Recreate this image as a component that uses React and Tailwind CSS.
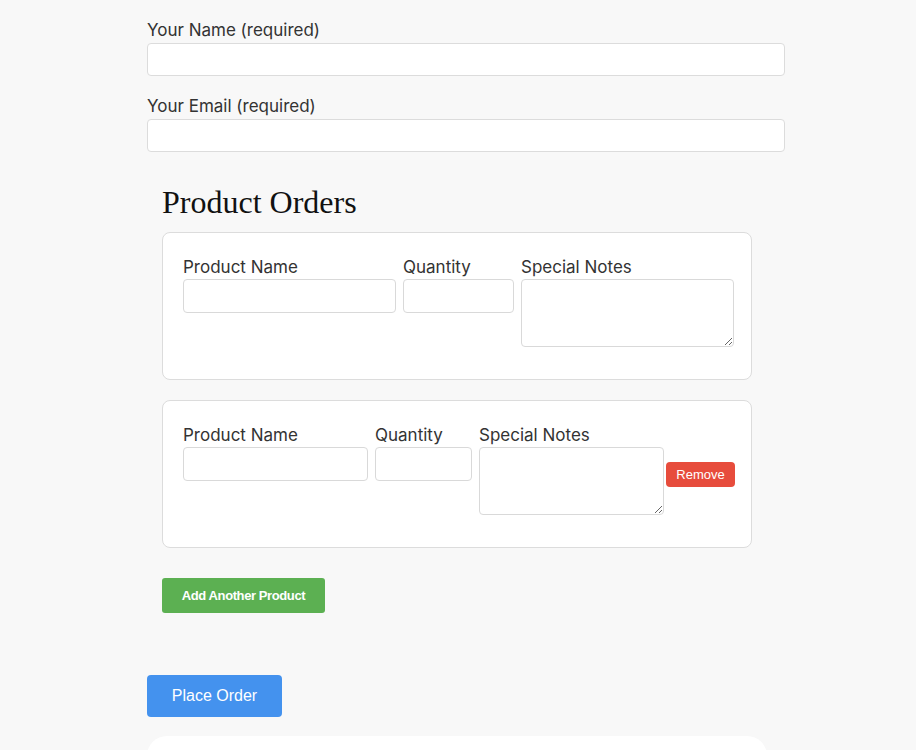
import React from "react";

const inputCls =
  "block w-full h-[34px] bg-white border border-[#d9d9d9] rounded-[4px] px-2 text-[15px]";

const ProductRow = ({ removable, widths }) => {
  return (
    <div className="bg-white border border-[#dcdcdc] rounded-[8px] pl-[20px] pr-[16px] pt-[22px] pb-[32px]">
      <div className="flex items-center">
        <div className={`flex ${removable ? "gap-[7px]" : "gap-[7px] w-full"}`}>
          <div className={widths[0]}>
            <label className="block text-[17px] leading-[24px] text-[#333]">Product Name</label>
            <input type="text" className={inputCls} />
          </div>
          <div className={widths[1]}>
            <label className="block text-[17px] leading-[24px] text-[#333]">Quantity</label>
            <input type="number" className={inputCls} />
          </div>
          <div className={widths[2]}>
            <label className="block text-[17px] leading-[24px] text-[#333]">Special Notes</label>
            <textarea className="block w-full h-[68px] bg-white border border-[#d9d9d9] rounded-[4px] px-2" />
          </div>
        </div>
        {removable && (
          <button className="ml-[2px] mt-[11px] w-[70px] h-[25px] bg-[#e74c3c] text-white text-[13px] rounded-[4px] font-['Liberation_Sans',sans-serif]">
            Remove
          </button>
        )}
      </div>
    </div>
  );
};

const App = () => {
  return (
    <div className="h-[750px] bg-[#f8f8f8] font-['Inter',sans-serif] overflow-hidden">
      <div className="w-[638px] ml-[147px] pt-[18px]">
        <label className="block text-[17px] leading-[24px] text-[#333]">Your Name (required)</label>
        <input type="text" className="block w-full h-[33px] bg-white border border-[#dcdcdc] rounded-[4px] mt-[1px]" />
        <label className="block text-[17px] leading-[24px] text-[#333] mt-[18px]">Your Email (required)</label>
        <input type="email" className="block w-full h-[33px] bg-white border border-[#dcdcdc] rounded-[4px] mt-[1px]" />

        <div className="ml-[15px] w-[590px]">
          <h2 className="mt-[32px] text-[32px] leading-[36px] text-[#111] font-['Liberation_Serif',serif] tracking-[0px]">
            Product Orders
          </h2>
          <div className="mt-[12px] flex flex-col gap-[20px]">
            <ProductRow widths={["w-[213px]", "w-[111px]", "w-[213px]"]} />
            <ProductRow removable widths={["w-[185px]", "w-[97px]", "w-[185px]"]} />
          </div>
          <button className="mt-[30px] w-[163px] h-[35px] bg-[#5cb052] text-white text-[13px] font-bold tracking-[-0.4px] rounded-[3px] font-['Liberation_Sans',sans-serif]">
            Add Another Product
          </button>
        </div>

        <button className="block mt-[62px] w-[135px] h-[42px] bg-[#4492ee] text-white text-[16px] rounded-[4px] font-['Liberation_Sans',sans-serif]">
          Place Order
        </button>

        <div className="mt-[19px] w-[620px] h-[60px] bg-white rounded-[20px]" />
      </div>
    </div>
  );
};

export default App;
